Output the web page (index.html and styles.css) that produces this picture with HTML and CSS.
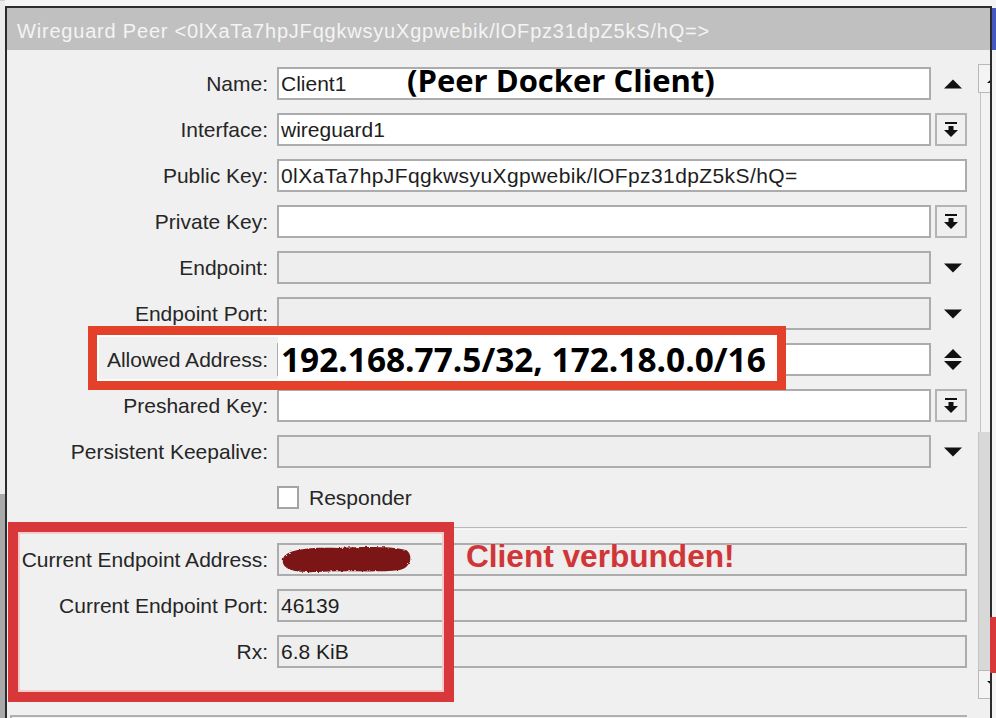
FILE: index.html
```html
<!DOCTYPE html>
<html lang="de">
<head>
  <meta charset="UTF-8">
  <title>Wireguard Peer</title>
  <link rel="stylesheet" href="styles.css">
</head>
<body>
  <div class="desktop">
    <div class="backdrop-left">
      <div class="backdrop-dark"></div>
    </div>
    <div class="other-title"></div>

    <div class="window">
      <div class="titlebar">Wireguard Peer &lt;0lXaTa7hpJFqgkwsyuXgpwebik/lOFpz31dpZ5kS/hQ=&gt;</div>
      <div class="content">
        <div class="form">
          <span class="label">Name:</span>
          <div class="field">Client1</div>
          <div class="arrow"><svg width="18" height="10" viewBox="0 0 18 10"><path d="M0 9.5 L9 0.5 L18 9.5Z"/></svg></div>

          <span class="label">Interface:</span>
          <div class="field">wireguard1</div>
          <div class="btn"><svg width="14" height="16" viewBox="0 0 14 16"><rect x="1" y="0" width="12" height="2"/><rect x="4.5" y="4" width="5" height="4"/><path d="M0 8 L14 8 L7 15Z"/></svg></div>

          <span class="label">Public Key:</span>
          <div class="field wide key">0lXaTa7hpJFqgkwsyuXgpwebik/lOFpz31dpZ5kS/hQ=</div>

          <span class="label">Private Key:</span>
          <div class="field"></div>
          <div class="btn"><svg width="14" height="16" viewBox="0 0 14 16"><rect x="1" y="0" width="12" height="2"/><rect x="4.5" y="4" width="5" height="4"/><path d="M0 8 L14 8 L7 15Z"/></svg></div>

          <span class="label">Endpoint:</span>
          <div class="field off"></div>
          <div class="arrow"><svg width="18" height="10" viewBox="0 0 18 10"><path d="M0 0.5 L18 0.5 L9 9.5Z"/></svg></div>

          <span class="label">Endpoint Port:</span>
          <div class="field off"></div>
          <div class="arrow"><svg width="18" height="10" viewBox="0 0 18 10"><path d="M0 0.5 L18 0.5 L9 9.5Z"/></svg></div>

          <span class="label">Allowed Address:</span>
          <div class="field"></div>
          <div class="arrow"><svg width="18" height="24" viewBox="0 0 18 24"><path d="M0 10 L9 1 L18 10Z M0 13 L18 13 L9 22Z"/></svg></div>

          <span class="label">Preshared Key:</span>
          <div class="field"></div>
          <div class="btn"><svg width="14" height="16" viewBox="0 0 14 16"><rect x="1" y="0" width="12" height="2"/><rect x="4.5" y="4" width="5" height="4"/><path d="M0 8 L14 8 L7 15Z"/></svg></div>

          <span class="label">Persistent Keepalive:</span>
          <div class="field off"></div>
          <div class="arrow"><svg width="18" height="10" viewBox="0 0 18 10"><path d="M0 0.5 L18 0.5 L9 9.5Z"/></svg></div>

          <span class="label"></span>
          <div class="check"><span class="box"></span>Responder</div>

          <div class="separator"></div>

          <span class="label">Current Endpoint Address:</span>
          <div class="field wide off">
            <svg class="scribble" width="132" height="27" viewBox="0 0 132 27">
              <defs>
                <filter id="rough" x="-5%" y="-20%" width="110%" height="140%">
                  <feTurbulence type="fractalNoise" baseFrequency="0.3" numOctaves="2" seed="4"/>
                  <feDisplacementMap in="SourceGraphic" scale="3"/>
                </filter>
              </defs>
              <path filter="url(#rough)" d="M2 13 C4 2 36 1 58 2 C80 1 108 0 125 4 C132 8 131 21 119 24 C94 27 62 24 36 26 C12 27 0 23 2 13Z"/>
            </svg>
          </div>

          <span class="label">Current Endpoint Port:</span>
          <div class="field wide off">46139</div>

          <span class="label">Rx:</span>
          <div class="field wide off">6.8 KiB</div>

          <div class="bottom-box"></div>
        </div>

        <div class="scrollbar">
          <div class="sb-btn"><svg width="18" height="10" viewBox="0 0 18 10"><path d="M0 9 L9 1 L18 9Z"/></svg></div>
          <div class="sb-thumb"></div>
          <div class="sb-track"></div>
          <div class="sb-btn"><svg width="18" height="10" viewBox="0 0 18 10"><path d="M0 1 L18 1 L9 9Z"/></svg></div>
        </div>
      </div>
    </div>

    <!-- annotations drawn over the screenshot -->
    <div class="note-title">(Peer Docker Client)</div>
    <div class="mark mark-allowed"></div>
    <div class="note-allowed">192.168.77.5/32, 172.18.0.0/16</div>
    <div class="mark mark-current"></div>
    <div class="note-connected">Client verbunden!</div>
    <div class="mark-edge"></div>
  </div>
</body>
</html>
```

FILE: styles.css
```css
:root {
  --bg: #f0f0f0;
  --frame: #2b2b2b;
  --field-border: #acacac;
  --text: #1e1e1e;
  --red: #e4412b;
  --red-dark: #d8383a;
}
body {
  margin: 0;
  background: var(--bg);
  font-family: 'Liberation Sans', Arial, sans-serif;
  color: var(--text);
}
.desktop {
  position: relative;
  width: 996px;
  height: 718px;
  overflow: hidden;
  background: #f4f4f4;
}
.backdrop-left {
  position: absolute;
  left: 0; top: 0;
  width: 5px; height: 718px;
  background: #ececec;
  border-top: 1px solid #d0d0d0;
}
.backdrop-dark {
  position: absolute;
  left: 0; top: 493px;
  width: 5px; height: 225px;
  background: #a9a9a9;
}
.other-title {
  position: absolute;
  left: 992px; top: 8px;
  width: 4px; height: 42px;
  background: #4458c0;
}
.window {
  position: absolute;
  left: 5px; top: 6px;
  width: 983px;
  height: 720px;
  border: 2px solid var(--frame);
  border-bottom: 0;
  background: var(--bg);
  overflow: hidden;
}
.titlebar {
  height: 42px;
  box-sizing: border-box;
  padding: 3px 0 0 10px;
  line-height: 40px;
  background: #c0c0c0;
  color: #f4f4f4;
  font-size: 20px;
  letter-spacing: 0.8px;
  white-space: nowrap;
  overflow: hidden;
}
.content {
  display: flex;
  padding-top: 17px;
}
.form {
  width: 960px;
  flex: none;
  display: grid;
  grid-template-columns: 261px 663px 36px;
  grid-template-rows: repeat(10, 33px) 3px repeat(3, 33px) 40px;
  row-gap: 13px;
  font-size: 21px;
}
.label {
  grid-column: 1;
  text-align: right;
  line-height: 33px;
  white-space: nowrap;
  color: #262626;
}
.field {
  grid-column: 2;
  margin-left: 9px;
  border: 2px solid var(--field-border);
  background: #fff;
  line-height: 29px;
  padding-left: 2px;
  white-space: nowrap;
  overflow: hidden;
  display: flex;
  align-items: center;
}
.field.wide { grid-column: 2 / 4; }
.field.off { background: #eeeeee; }
.key { letter-spacing: 0.4px; }
.arrow {
  grid-column: 3;
  display: flex;
  align-items: center;
  justify-content: center;
  padding-left: 8px;
}
.btn {
  grid-column: 3;
  justify-self: end;
  width: 32px;
  box-sizing: border-box;
  border: 2px solid #b4b4b4;
  background: var(--bg);
  display: flex;
  align-items: center;
  justify-content: center;
}
svg path, svg rect { fill: #111; }
.scribble path { fill: #7c1416; }
.check {
  grid-column: 2 / 4;
  margin-left: 9px;
  display: flex;
  align-items: center;
  gap: 10px;
  color: #262626;
}
.box {
  width: 18px; height: 19px;
  border: 2px solid #a4a4a4;
  background: #fff;
}
.separator {
  grid-column: 1 / -1;
  margin-left: 3px;
  border-top: 1px solid #b8b8b8;
  border-bottom: 1px solid #fafafa;
}
.bottom-box {
  grid-column: 1 / -1;
  margin: 34px 0 0 3px;
  border-top: 2px solid #b0b0b0;
  border-left: 2px solid #b0b0b0;
  background: #f2f2f2;
}
.scrollbar {
  flex: none;
  width: 20px;
  margin: -3px 0 0 11px;
  display: flex;
  flex-direction: column;
}
.sb-btn {
  height: 29px;
  box-sizing: border-box;
  border: 1px solid #b8b8b8;
  background: #f4f4f4;
  display: flex;
  align-items: center;
  justify-content: flex-end;
}
.sb-btn svg { margin-right: -8px; }
.sb-thumb {
  height: 339px;
  border-left: 1px solid #c4c4c4;
  margin-left: 2px;
  background: #f2f2f2;
}
.sb-track {
  height: 238px;
  background: #d8d8d8;
  border-left: 1px solid #c4c4c4;
}

/* annotations */
.note-title {
  position: absolute;
  left: 407px; top: 64px;
  font-family: 'Open Sans', sans-serif;
  font-weight: 700;
  font-size: 31px;
  line-height: 33px;
  color: #000;
  white-space: nowrap;
}
.mark {
  position: absolute;
  box-sizing: border-box;
}
.mark-allowed {
  left: 88px; top: 326px;
  width: 698px; height: 64px;
  border: 9px solid var(--red);
  box-shadow: inset 0 0 0 2px #fff;
}
.note-allowed {
  position: absolute;
  left: 278px; top: 335px;
  width: 499px; height: 46px;
  box-sizing: border-box;
  padding: 2px 0 0 3px;
  background: #fff;
  font-family: 'Open Sans', sans-serif;
  font-weight: 700;
  font-size: 33.4px;
  line-height: 44px;
  color: #000;
  white-space: nowrap;
}
.mark-current {
  left: 8px; top: 522px;
  width: 446px; height: 180px;
  border: 10px solid var(--red-dark);
  box-shadow: inset 0 0 0 2px #f6cccc;
}
.note-connected {
  position: absolute;
  left: 466px; top: 541px;
  font-weight: 700;
  font-size: 31.6px;
  line-height: 31px;
  color: #cf3639;
  text-shadow: 0 0 2px #fbe9e0;
  white-space: nowrap;
}
.mark-edge {
  position: absolute;
  left: 990px; top: 617px;
  width: 6px; height: 56px;
  background: var(--red-dark);
}
```
